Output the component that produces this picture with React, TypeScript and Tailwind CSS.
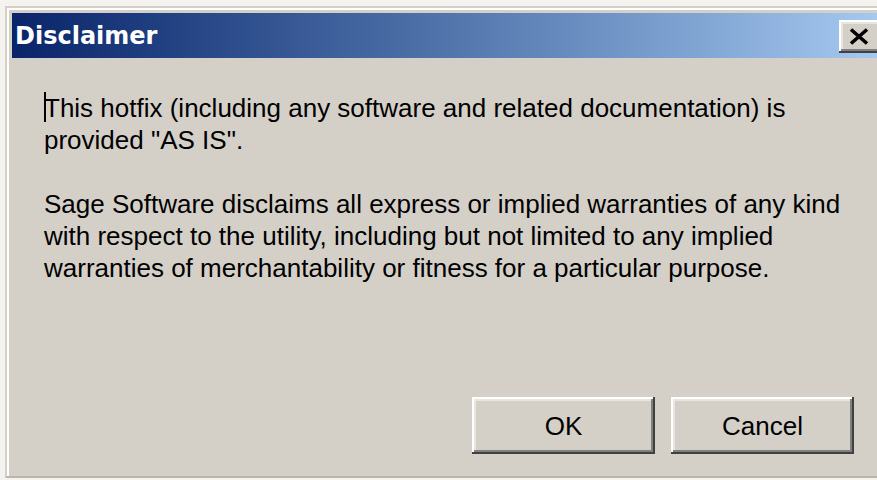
import React from 'react';

const bevel =
  'shadow-[inset_-2px_-2px_0_#404040,inset_2px_2px_0_#ffffff,inset_-4px_-4px_0_#808080,inset_4px_4px_0_#e8e6e0]';

const CloseIcon: React.FC = () => (
  <svg width="22" height="17" viewBox="0 0 22 17">
    <path d="M3 1.5L19 15.5M19 1.5L3 15.5" stroke="#000" strokeWidth="3.6" />
  </svg>
);

const DialogButton: React.FC<{ label: string }> = ({ label }) => (
  <button
    className={`w-[183px] h-[57px] bg-[#d4d0c8] text-black text-[26px] leading-none ${bevel}`}
  >
    {label}
  </button>
);

const App: React.FC = () => {
  return (
    <div
      className="w-[877px] h-[480px] overflow-hidden bg-[#f4f3ef] pt-[6px] pl-[5px]"
      style={{ fontFamily: '"Liberation Sans", Arial, sans-serif' }}
    >
      <div className="w-[880px] h-[472px] border-t-2 border-l-2 border-b-2 border-t-[#d4d0c8] border-l-[#d4d0c8] border-b-[#b9b6ae] bg-[#d4d0c8]">
        <div className="h-full border-t-2 border-l-2 border-white pt-[3px] pl-[3px] flex flex-col">
          {/* title bar */}
          <div className="h-[45px] flex items-center bg-gradient-to-r from-[#0a246a] to-[#a6caf0] pl-[3px]">
            <span
              className="text-white font-bold text-[24px] leading-none"
              style={{ fontFamily: '"DejaVu Sans", Verdana, sans-serif' }}
            >
              Disclaimer
            </span>
            <div
              className={`ml-auto mt-[2px] w-[46px] h-[33px] bg-[#d4d0c8] flex items-center justify-start pl-[9px] ${bevel}`}
            >
              <CloseIcon />
            </div>
          </div>

          {/* message */}
          <div className="relative pt-[34px] pl-[32px] text-black text-[26px] leading-[32px]">
            <span className="absolute left-[32px] top-[34px] w-[2px] h-[30px] bg-black" />
            <p>
              This hotfix (including any software and related documentation) is
              <br />
              provided "AS IS".
            </p>
            <p className="mt-[32px]">
              Sage Software disclaims all express or implied warranties of any kind
              <br />
              with respect to the utility, including but not limited to any implied
              <br />
              warranties of merchantability or fitness for a particular purpose.
            </p>
          </div>

          <div className="mt-auto mb-[22px] flex justify-end gap-[16px] pr-[31px]">
            <DialogButton label="OK" />
            <DialogButton label="Cancel" />
          </div>
        </div>
      </div>
    </div>
  );
};

export default App;
